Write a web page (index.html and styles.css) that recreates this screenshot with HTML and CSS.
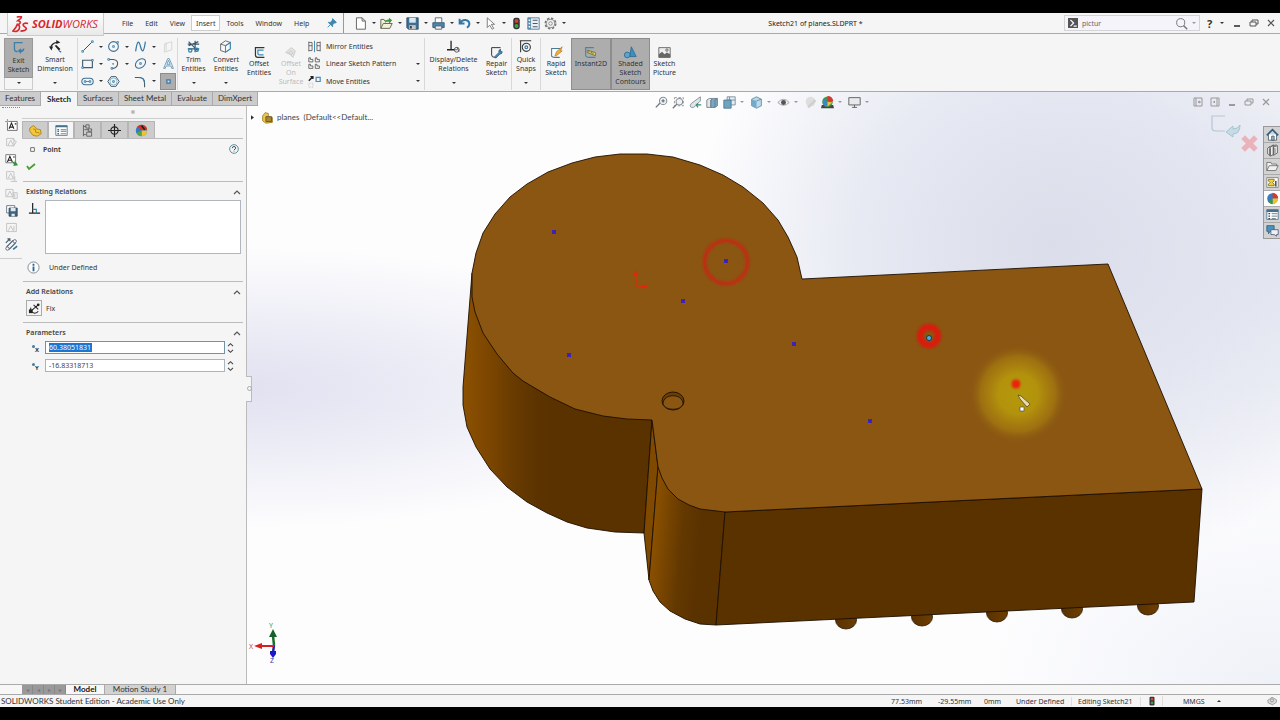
FILE: index.html
```html
<!DOCTYPE html>
<html lang="en">
<head>
<meta charset="utf-8">
<title>Sketch21 of planes.SLDPRT</title>
<link rel="stylesheet" href="styles.css">
</head>
<body>
<div class="app">

<header class="titlebar">
  <div class="logo">
    <svg class="logo-mark" viewBox="0 0 18 18"><path d="M5 1c2 0 5-1 5 0 0 2-3 3-4 4 3 0 4 2 1 4M6 8c-1 3-3 6-5 8 3 1 7 0 7-4 0-2-1-3-3-3M17 8c-3-1-6 0-5 2s4 2 3 4-3 2-6 2" fill="none" stroke="#d8262c" stroke-width="1.700"/></svg>
    <span class="logo-text"><b>SOLID</b>WORKS</span>
  </div>
  <nav class="menus">
    <button>File</button><button>Edit</button><button>View</button><button class="hot">Insert</button><button>Tools</button><button>Window</button><button>Help</button>
    <button class="pin" aria-label="Pin menu"><svg class="i10" viewBox="0 0 16 16"><path d="M9 1l6 6-2 1-2 0-2 3 0 3-7-7 3 0 3-2zM5 11l-4 4" fill="#3f86ae" stroke="#3f86ae" stroke-width="1.4"/></svg></button>
  </nav>
  <div class="quick">
    <button aria-label="New"><svg class="i14" viewBox="0 0 16 16"><path d="M3 1h7l4 4v10H3zM10 1v4h4" fill="#fff" stroke="#666" stroke-width="1.2"/></svg><i class="caret"></i></button>
    <button aria-label="Open"><svg class="i14" viewBox="0 0 16 16"><path d="M1 14V3h4l1 2h6v3M1 14l3-6h11l-3 6z" fill="#f2efda" stroke="#6a6a55" stroke-width="1.2"/><path d="M6 8c0-4 2-5 5-5V1l4 3-4 4V5c-2 0-4 1-5 3" fill="#3e9a3a"/></svg><i class="caret"></i></button>
    <button aria-label="Save"><svg class="i14" viewBox="0 0 16 16"><path d="M1 1h14v14H3l-2-2z" fill="#3d7094" stroke="#2b4a60"/><path d="M4 1h8v6H4z" fill="#d9e8f0"/><path d="M4 10h8v5H4z" fill="#c6c6c6"/><path d="M6 11v3" stroke="#333" stroke-width="2"/></svg><i class="caret"></i></button>
    <button aria-label="Print"><svg class="i14" viewBox="0 0 16 16"><path d="M4 7V1h8v6" fill="#fff" stroke="#456" /><path d="M1 7h14v6H1z" fill="#4a87ac" stroke="#2f536b"/><path d="M4 11h8v4H4z" fill="#eee" stroke="#456"/></svg><i class="caret"></i></button>
    <button aria-label="Undo"><svg class="i14" viewBox="0 0 16 16"><path d="M2 2v6h6M3 7c3-5 10-4 11 1 0 2-1 4-3 5" fill="none" stroke="#3577a3" stroke-width="2.4"/></svg><i class="caret"></i></button>
    <button aria-label="Select"><svg class="i14" viewBox="0 0 16 16"><path d="M4 1v12l3-3 3 5 2-1-3-5h4z" fill="#fff" stroke="#666"/></svg><i class="caret"></i></button>
    <button class="solo" aria-label="Rebuild"><svg class="i14" viewBox="0 0 16 16"><rect x="4" y="1" width="8" height="14" rx="3" fill="#333"/><circle cx="8" cy="5" r="2.4" fill="#e03b30"/><circle cx="8" cy="11" r="2.4" fill="#39a347"/></svg></button>
    <button class="solo" aria-label="File properties"><svg class="i14" viewBox="0 0 16 16"><path d="M1 1h14v14H1z" fill="#e9f1f5" stroke="#456f8a"/><path d="M1 1h4v14H1z" fill="#5d8dab"/><path d="M2 4h2M2 8h2M2 12h2" stroke="#fff" stroke-width="1.6"/><path d="M7 4h6M7 8h6M7 12h6" stroke="#456" stroke-width="1.2"/></svg></button>
    <button class="solo" aria-label="Options"><svg class="i14" viewBox="0 0 16 16"><circle cx="8" cy="8" r="6.4" fill="none" stroke="#777" stroke-width="2" stroke-dasharray="3 2"/><circle cx="8" cy="8" r="5" fill="#f4f4f4" stroke="#777"/><circle cx="8" cy="8" r="2.2" fill="none" stroke="#777"/></svg><i class="caret"></i></button>
  </div>
  <h1 class="doc-title">Sketch21 of planes.SLDPRT *</h1>
  <label class="search">
    <svg class="i10" viewBox="0 0 16 16"><path d="M0 0h16v16H0z" fill="#555"/><path d="M4 3l5 5-5 5M9 13h5" fill="none" stroke="#fff" stroke-width="2"/></svg>
    <input type="text" value="pictur" aria-label="Search">
    <svg class="i14" viewBox="0 0 16 16"><circle cx="7" cy="7" r="5" fill="none" stroke="#777" stroke-width="1.2"/><path d="M10.500 10.500l4.500 4.500" stroke="#777" stroke-width="1.800"/></svg><i class="caret grey"></i>
  </label>
  <div class="window-controls">
    <button class="help">?<i class="caret"></i></button>
    <button aria-label="Minimize"><svg class="i10" viewBox="0 0 10 10"><path d="M2 8h6" stroke="#333" stroke-width="1.600"/></svg></button>
    <button aria-label="Restore"><svg class="i10" viewBox="0 0 10 10"><path d="M1 4h6v4H1zM3 4V2h6v4H7" fill="none" stroke="#555"/></svg></button>
    <button aria-label="Close"><svg class="i10" viewBox="0 0 10 10"><path d="M2 2l6 6M8 2l-6 6" stroke="#555" stroke-width="1.200"/></svg></button>
  </div>
</header>

<section class="ribbon" aria-label="Sketch commands">
  <button class="tool exit"><span class="face"><svg class="i14" viewBox="0 0 16 16"><path d="M13 2H3v8q0 3 4 3" fill="none" stroke="#3e7fa8" stroke-width="1.600"/><path d="M7 12l4-3v2q3 0 4-3 1 5-4 6v2z" fill="#3e7fa8"/></svg><span>Exit<br>Sketch</span></span><i class="caret"></i></button>
  <button class="tool smart"><span class="face"><svg class="i14" viewBox="0 0 16 16"><path d="M2 10q1-6 8-7" fill="none" stroke="#222" stroke-width="1.500"/><path d="M0 8h5l-2 5zM9 0v5l5-2zM7 7l2-1 5 5-2 2z" fill="#222"/><path d="M12 13l3 2" stroke="#3577a3" stroke-width="1.500"/></svg><span>Smart<br>Dimension</span></span><i class="caret"></i></button>

  <div class="shapes">
    <button aria-label="Line"><svg class="i14" viewBox="0 0 16 16"><path d="M3 13L13 3" stroke="#444" stroke-width="1.200"/><path d="M1 13h2v2H1zM13 1h2v2h-2z" fill="#fff" stroke="#3577a3"/></svg><i class="caret"></i></button>
    <button aria-label="Circle"><svg class="i14" viewBox="0 0 16 16"><circle cx="8" cy="8" r="6" fill="none" stroke="#3b6f92" stroke-width="1.300"/><path d="M7 7h2v2H7zM12 2h2v2h-2z" fill="#fff" stroke="#3577a3"/></svg><i class="caret"></i></button>
    <button aria-label="Spline"><svg class="i14" viewBox="0 0 16 16"><path d="M2 14C4 0 6 0 8 8s4 8 6-6" fill="none" stroke="#3577a3" stroke-width="1.500"/></svg><i class="caret"></i></button>
    <button aria-label="Plane" disabled><svg class="i14" viewBox="0 0 16 16"><path d="M3 5l9-3v10l-9 3zM5 3v10" fill="none" stroke="#d0d0d0"/></svg></button>
    <button aria-label="Rectangle"><svg class="i14" viewBox="0 0 16 16"><path d="M2 4h12v9H2z" fill="none" stroke="#445d6e" stroke-width="1.400"/><path d="M1 12h2v2H1zM13 3h2v2h-2z" fill="#fff" stroke="#3577a3"/></svg><i class="caret"></i></button>
    <button aria-label="Arc"><svg class="i14" viewBox="0 0 16 16"><path d="M2 3h6q6 1 5 6-1 5-7 5" fill="none" stroke="#555" stroke-width="1.300"/><path d="M1 2h2v2H1zM5 13h2v2H5zM7 8h1v1H7z" fill="#fff" stroke="#3577a3"/></svg><i class="caret"></i></button>
    <button aria-label="Ellipse"><svg class="i14" viewBox="0 0 16 16"><ellipse cx="8" cy="8" rx="7" ry="5" transform="rotate(-40 8 8)" fill="none" stroke="#3b6f92" stroke-width="1.300"/><path d="M7 7h2v2H7z" fill="none" stroke="#3577a3"/></svg><i class="caret"></i></button>
    <button aria-label="Text"><svg class="i14" viewBox="0 0 16 16"><path d="M2 14L7 2h2l5 12h-2l-1-3H5l-1 3zM6 9h4L8 4z" fill="none" stroke="#5590b3"/></svg></button>
    <button aria-label="Slot"><svg class="i14" viewBox="0 0 16 16"><rect x="1" y="4" width="14" height="8" rx="4" fill="none" stroke="#3b6f92" stroke-width="1.300"/><path d="M4 7h2v2H4zM10 7h2v2h-2zM6 8h4" fill="none" stroke="#3577a3"/></svg><i class="caret"></i></button>
    <button aria-label="Polygon"><svg class="i14" viewBox="0 0 16 16"><path d="M5 2h6l4 6-4 6H5L1 8z" fill="none" stroke="#445d6e" stroke-width="1.200"/><circle cx="8" cy="8" r="4.400" fill="none" stroke="#73a8c6"/><path d="M7 7h2v2H7z" fill="none" stroke="#3577a3"/></svg></button>
    <button aria-label="Fillet"><svg class="i14" viewBox="0 0 16 16"><path d="M1 3h5q7 0 7 7v5" fill="none" stroke="#555" stroke-width="1.300"/><path d="M6 3q7 0 7 7" fill="none" stroke="#3577a3" stroke-width="1.300"/></svg><i class="caret"></i></button>
    <button class="pressed" aria-label="Point"><svg class="i14" viewBox="0 0 16 16"><path d="M6 6h4v4H6z" fill="#c6e0ee" stroke="#3577a3" stroke-width="1.500"/></svg></button>
  </div>

  <button class="tool trim"><span class="face"><svg class="i14" viewBox="0 0 16 16"><path d="M2 2l11 11M2 7l12-5M1 5h14M1 11h14M10 1v14" stroke="#34566e" stroke-width="1.400"/><circle cx="4" cy="13" r="2" fill="none" stroke="#2f83ad" stroke-width="1.500"/><circle cx="12" cy="12" r="2" fill="none" stroke="#2f83ad" stroke-width="1.500"/></svg><span>Trim<br>Entities</span></span><i class="caret"></i></button>
  <button class="tool convert"><span class="face"><svg class="i14" viewBox="0 0 16 16"><path d="M2 5l6-4 6 2v8l-6 4-6-2zM2 5l6 2 6-4M8 7v8" fill="#f8f8f8" stroke="#555"/><path d="M8 7v8l6-4V3z" fill="none" stroke="#3f8db8" stroke-width="1.300"/></svg><span>Convert<br>Entities</span></span><i class="caret"></i></button>
  <button class="tool offset low"><span class="face"><svg class="i14" viewBox="0 0 16 16"><path d="M14 2H3v9q0 3 3 3h8" fill="none" stroke="#333" stroke-width="1.500"/><path d="M13 5H6v4q0 2 2 2h5" fill="none" stroke="#3e8cb8" stroke-width="1.500"/></svg><span>Offset<br>Entities</span></span></button>
  <button class="tool surface low" disabled><span class="face"><svg class="i14" viewBox="0 0 16 16"><path d="M2 8l7-6 5 4-3 8-4-4zM6 8l3-2 2 2-2 3z" fill="#e4e4e4" stroke="#c4c4c4"/></svg><span>Offset<br>On<br>Surface</span></span></button>

  <div class="list">
    <button><svg class="i14" viewBox="0 0 16 16"><path d="M1 2v12M1 7h4M1 3h4v10H1M15 2v12M15 7h-4M15 3h-4v10h4" fill="none" stroke="#555"/><path d="M8 1v14" stroke="#3f8db8" stroke-width="1.200"/></svg><span>Mirror Entities</span></button>
    <button><svg class="i14" viewBox="0 0 16 16"><path d="M1 1h2v2h3v3H1zM9 1h2v2h3v3H9zM1 9h2v2h3v3H1zM9 9h2v2h3v3H9z" fill="none" stroke="#555"/></svg><span>Linear Sketch Pattern</span><i class="caret"></i></button>
    <button><svg class="i14" viewBox="0 0 16 16"><path d="M1 7l5-5M3 2h3v3" fill="none" stroke="#222" stroke-width="1.800"/><path d="M10 3h5v5h-5z" fill="none" stroke="#3f8db8" stroke-width="1.500"/><path d="M1 10h5v5H1z" fill="none" stroke="#bbb" stroke-dasharray="1 1"/></svg><span>Move Entities</span><i class="caret"></i></button>
  </div>

  <button class="tool relations"><span class="face"><svg class="i14" viewBox="0 0 16 16"><path d="M5 1v11M0 12h9" stroke="#222" stroke-width="1.600"/><circle cx="12" cy="12" r="3" fill="none" stroke="#444"/><path d="M9 12h4M12 9l3 5" stroke="#444"/></svg><span>Display/Delete<br>Relations</span></span><i class="caret"></i></button>
  <button class="tool repair low"><span class="face"><svg class="i14" viewBox="0 0 16 16"><path d="M13 2H2v9q0 3 4 3" fill="none" stroke="#333" stroke-width="1.200"/><path d="M6 13l5-5q-1-3 2-4v3h2q0 3-3 3l-5 5z" fill="#4d91b9" stroke="#245474"/></svg><span>Repair<br>Sketch</span></span></button>
  <button class="tool snaps"><span class="face"><svg class="i14" viewBox="0 0 16 16"><path d="M1 1h14M2 1v14" stroke="#333" stroke-width="1.300"/><circle cx="9" cy="9" r="5" fill="none" stroke="#333" stroke-width="1.300"/><circle cx="9" cy="9" r="1.700" fill="none" stroke="#3577a3" stroke-width="1.400"/></svg><span>Quick<br>Snaps</span></span><i class="caret"></i></button>
  <button class="tool rapid low"><span class="face"><svg class="i14" viewBox="0 0 16 16"><path d="M13 3H2v9q0 2 4 2h6" fill="#fff" stroke="#4b7a97" stroke-width="1.300"/><path d="M6 12l2-5 7-6-2 5h2l-7 6z" fill="#f0b233" stroke="#b16b1c" stroke-width=".8"/></svg><span>Rapid<br>Sketch</span></span></button>
  <button class="tool instant low pressed"><span class="face"><svg class="i14" viewBox="0 0 16 16"><path d="M12 2H2v9q0 3 5 3h7" fill="none" stroke="#3f87b1" stroke-width="1.400"/><path d="M4 5l10 3v4L4 8z" fill="#e8d965" stroke="#6d672f"/><path d="M6 6v2M9 7v2M11 8v2" stroke="#554"/></svg><span>Instant2D</span></span></button>
  <button class="tool shaded low pressed"><span class="face"><svg class="i14" viewBox="0 0 16 16"><path d="M9 1l6 12H7z" fill="#3d8fc0" stroke="#2a6890"/><circle cx="4" cy="11" r="3.500" fill="#5aa5cd" stroke="#2a6890"/></svg><span>Shaded<br>Sketch<br>Contours</span></span></button>
  <button class="tool picture low"><span class="face"><svg class="i14" viewBox="0 0 16 16"><path d="M1 2h14v12H1z" fill="#eee" stroke="#555"/><path d="M1 10l4-3 3 3 3-2 4 2v4H1z" fill="#666"/><circle cx="11" cy="5" r="1.500" fill="none" stroke="#555"/></svg><span>Sketch<br>Picture</span></span></button>
</section>

<main class="work">
  <nav class="ribbon-tabs">
    <button>Features</button><button class="active">Sketch</button><button>Surfaces</button><button>Sheet Metal</button><button>Evaluate</button><button>DimXpert</button>
  </nav>

  <aside class="left">
    <div class="rail">
      <span class="rail-grip"></span>
      <button aria-label="New note"><svg class="i14" viewBox="0 0 16 16"><path d="M3 3h12v11H3z" fill="#fff" stroke="#555"/><path d="M5 12l3-7 3 7M6 10h4M12 6h2" fill="none" stroke="#222" stroke-width="1.300"/><path d="M0 3h5M3 0v5" stroke="#d69a3a" stroke-width="1.300"/></svg></button>
      <button disabled aria-label="Edit note"><svg class="i14" viewBox="0 0 16 16"><path d="M2 3h9v9H2zM4 11l3-6 3 6M9 4l5 3-4 6" fill="none" stroke="#c4c4c4" stroke-width="1.200"/></svg></button>
      <button aria-label="Insert note"><svg class="i14" viewBox="0 0 16 16"><path d="M1 2h12v10H1z" fill="#fff" stroke="#666"/><path d="M3 11l3-7 3 7M4 9h4M10 5h2" fill="none" stroke="#222" stroke-width="1.300"/><path d="M8 9l4 3V9l4 6-6 1 1-2z" fill="#2c9636"/></svg></button>
      <button disabled aria-label="Add"><svg class="i14" viewBox="0 0 16 16"><path d="M2 2h9v9H2zM4 10l3-6 3 6M7 14h8M12 8v6" fill="none" stroke="#c4c4c4" stroke-width="1.200"/></svg></button>
      <button disabled aria-label="Delete"><svg class="i14" viewBox="0 0 16 16"><path d="M1 3h9v9H1zM3 11l3-6 3 6M10 7h5v7h-5zM12 8v5" fill="none" stroke="#c4c4c4" stroke-width="1.200"/></svg></button>
      <button aria-label="Save style"><svg class="i14" viewBox="0 0 16 16"><path d="M2 2h10v9H2z" fill="#fff" stroke="#567"/><path d="M5 5h10v10H5z" fill="#41637d" stroke="#2c455a"/><path d="M7 5h6v4H7zM8 12h4v3H8z" fill="#dde8ef"/></svg></button>
      <button disabled aria-label="Load style"><svg class="i14" viewBox="0 0 16 16"><path d="M2 3h12v10H2zM4 12l3-6 3 6M11 6v6" fill="none" stroke="#c4c4c4" stroke-width="1.200"/></svg></button>
      <button aria-label="Link"><svg class="i14" viewBox="0 0 16 16"><path d="M1 6l4-4M3 1h3v3M2 11l8-8M5 14l8-8" fill="none" stroke="#44586a" stroke-width="1.400"/><circle cx="3" cy="13" r="2" fill="#fff" stroke="#44586a"/><circle cx="12" cy="4" r="2" fill="#fff" stroke="#44586a"/><path d="M10 14l5-4" stroke="#3577a3" stroke-width="2"/></svg></button>
    </div>

    <div class="manager">
      <div class="grip"><span></span></div>
      <div class="mgr-tabs">
        <button aria-label="Feature tree"><svg class="i14" viewBox="0 0 16 16"><path d="M1 5l4-3 3 2 1 2 5 1 1 5-5 3-5-1-4-5z" fill="#f2c73a" stroke="#a97b12"/><path d="M5 6l3 1v3l5 1" fill="none" stroke="#a97b12"/></svg></button>
        <button class="active" aria-label="Properties"><svg class="i14" viewBox="0 0 16 16"><path d="M1 2h14v12H1z" fill="#fff" stroke="#456f8a"/><path d="M1 2h14v2H1z" fill="#456f8a"/><path d="M3 7h2M3 9h2M3 12h2" stroke="#2f6b94" stroke-width="1.600"/><path d="M7 7h7M7 9h7M7 12h7" stroke="#666"/></svg></button>
        <button aria-label="Configurations"><svg class="i14" viewBox="0 0 16 16"><path d="M3 1v14M3 3h3M3 13h3M6 1h4v4H6zM9 6h4v3H9zM7 10h6v5H7zM4 7h5" fill="none" stroke="#555"/></svg></button>
        <button aria-label="Dimensions"><svg class="i14" viewBox="0 0 16 16"><circle cx="8" cy="8" r="4.500" fill="none" stroke="#222" stroke-width="1.400"/><path d="M8 0v16M0 8h16" stroke="#222" stroke-width="1.400"/></svg></button>
        <button aria-label="Display"><svg class="i14" viewBox="0 0 16 16"><circle cx="8" cy="8" r="7" fill="#3a77bd"/><path d="M8 8L3 3a7 7 0 0 1 12 4z" fill="#d43228"/><path d="M8 8h7a7 7 0 0 1-7 7z" fill="#eec52f"/><path d="M8 8v7a7 7 0 0 1-6-4z" fill="#4ca64a"/><path d="M8 2l4 5" stroke="#222" stroke-width="2"/></svg></button>
      </div>
      <div class="point-head">
        <svg class="i14" viewBox="0 0 14 14"><path d="M5 5h4v4H5z" fill="#fff" stroke="#666"/></svg>
        <h2>Point</h2>
        <button aria-label="Help"><svg class="i10" viewBox="0 0 12 12"><circle cx="6" cy="6" r="5.200" fill="none" stroke="#467a84"/><path d="M4 5q0-2 2-2t2 2q0 1-2 2M6 8v1" fill="none" stroke="#355b78" stroke-width="1.200"/></svg></button>
        <button class="ok" aria-label="OK"><svg class="i10" viewBox="0 0 10 10"><path d="M1 5l2 3 6-5" fill="none" stroke="#4b9d33" stroke-width="1.800"/></svg></button>
      </div>

      <section class="group relations-group">
        <h3>Existing Relations<svg class="chev" viewBox="0 0 8 6"><path d="M1 5l3-3 3 3" fill="none" stroke="#555" stroke-width="1.200"/></svg></h3>
        <div class="relation-row">
          <svg class="i14" viewBox="0 0 14 14"><path d="M5 1v11M1 12h12" stroke="#222" stroke-width="1.300"/><path d="M5 8h4v4" fill="none" stroke="#2f83ad" stroke-width="1.200"/></svg>
          <div class="relation-box" role="listbox" aria-label="Existing relations"></div>
        </div>
        <p class="state"><svg class="i14" viewBox="0 0 14 14"><circle cx="7" cy="7" r="6" fill="#fff" stroke="#7a8791"/><path d="M7 6v5M7 3v2" stroke="#2b6795" stroke-width="2"/></svg>Under Defined</p>
      </section>

      <section class="group add-group">
        <h3>Add Relations<svg class="chev" viewBox="0 0 8 6"><path d="M1 5l3-3 3 3" fill="none" stroke="#555" stroke-width="1.200"/></svg></h3>
        <button class="fix"><span class="fix-icon"><svg class="i14" viewBox="0 0 14 14"><path d="M3 6q-1 5 4 6 3 0 4-2M4 9l7-6M6 3l5 5" fill="none" stroke="#222" stroke-width="1.100"/><path d="M1 8h4v4H1z" fill="#222"/><circle cx="11" cy="3" r="1.500" fill="#222"/></svg></span>Fix</button>
      </section>

      <section class="group param-group">
        <h3>Parameters<svg class="chev" viewBox="0 0 8 6"><path d="M1 5l3-3 3 3" fill="none" stroke="#555" stroke-width="1.200"/></svg></h3>
        <div class="param">
          <label for="px"><i class="dot"></i><sub>X</sub></label>
          <div class="field focus"><input id="px" type="text" value="60.38051831"></div>
          <span class="spin"><button aria-label="Increase X"><svg viewBox="0 0 8 6"><path d="M1 5l3-3 3 3" fill="none" stroke="#444" stroke-width="1.300"/></svg></button><button aria-label="Decrease X"><svg viewBox="0 0 8 6"><path d="M1 1l3 3 3-3" fill="none" stroke="#444" stroke-width="1.300"/></svg></button></span>
        </div>
        <div class="param">
          <label for="py"><i class="dot"></i><sub>Y</sub></label>
          <div class="field"><input id="py" type="text" value="-16.83318713"></div>
          <span class="spin"><button aria-label="Increase Y"><svg viewBox="0 0 8 6"><path d="M1 5l3-3 3 3" fill="none" stroke="#444" stroke-width="1.300"/></svg></button><button aria-label="Decrease Y"><svg viewBox="0 0 8 6"><path d="M1 1l3 3 3-3" fill="none" stroke="#444" stroke-width="1.300"/></svg></button></span>
        </div>
      </section>
    </div>
  </aside>

  <section class="viewport">
    <svg class="scene" viewBox="247 92 1033 592" preserveAspectRatio="xMidYMid meet" role="img" aria-label="Part model">
      <defs>
        <linearGradient id="sideL" gradientUnits="userSpaceOnUse" x1="463" y1="0" x2="550" y2="0"><stop offset="0" stop-color="#8c5100"/><stop offset=".3" stop-color="#7c4600"/><stop offset=".6" stop-color="#673a00"/><stop offset=".85" stop-color="#5c3300"/><stop offset="1" stop-color="#5a3200"/></linearGradient>
        <linearGradient id="sideF" gradientUnits="userSpaceOnUse" x1="650" y1="560" x2="698" y2="564"><stop offset="0" stop-color="#8c5100"/><stop offset=".6" stop-color="#643900"/><stop offset="1" stop-color="#5a3200"/></linearGradient>
        <linearGradient id="ball"><stop offset="0" stop-color="#5a3200"/><stop offset="1" stop-color="#6c3e00"/></linearGradient>
        <radialGradient id="halo"><stop offset="0" stop-color="#b4990c"/><stop offset=".4" stop-color="#b3920c"/><stop offset=".75" stop-color="#a37610" stop-opacity=".8"/><stop offset="1" stop-color="#8a5612" stop-opacity="0"/></radialGradient>
        <filter id="soft" x="-20%" y="-20%" width="140%" height="140%"><feGaussianBlur stdDeviation=".8"/></filter>
        <g id="pt"><path d="M-2-2h4v4h-4z" fill="#4a2f80"/><path d="M-2-2l4 4M2-2l-4 4" stroke="#2e18f0" stroke-width="1"/></g>
      </defs>
      <g fill="url(#ball)" stroke="#241300" stroke-width=".8">
        <ellipse cx="846" cy="620" rx="10.500" ry="9"/><ellipse cx="922" cy="617" rx="10.500" ry="9"/><ellipse cx="997" cy="613" rx="10.500" ry="9"/><ellipse cx="1072" cy="609" rx="10.500" ry="9"/><ellipse cx="1148" cy="606" rx="10.500" ry="9"/>
      </g>
      <g stroke="#1c0f00" stroke-width=".9" stroke-linejoin="round">
        <path fill="url(#sideL)" d="M472 273L463 387V405L467 427 476 447 490 469 507 487 527 502 547 513 567 522 587 528 615 532 644 533 652 420 540 330z"/>
        <path fill="#7f4900" d="M652 420L644 533 649 580 658 467z"/>
        <path fill="url(#sideF)" d="M658 467L649 580 653 591 660 602 670 611 685 619 700 624 716 625 725 512z"/>
        <path fill="#5a3200" d="M725 512L1202 489 1194 602 716 625z"/>
        <path fill="#8a5612" d="M802 279L1108 264 1202 489 725 512 700 509 689 505 678 499 668 489 662 478 658 467 652 420 627 419 603 416 575 409 550 397 523 381 513 373 497 354 483 333 475 312 472 297V273L476 253 483 233 495 214 510 197 527 184 548 172 572 163 595 157 620 154H647L673 157 700 165 723 175 743 187 763 203 778 220 788 237 797 257z"/>
      </g>
      <ellipse cx="673" cy="401" rx="11" ry="9" fill="#6a3d04" stroke="#1c0f00" stroke-width=".9"/>
      <path d="M663 404c0-11 20-11 20 0-2 7-18 7-20 0z" fill="#8a5612" stroke="#1c0f00" stroke-width=".8"/>
      <g fill="none" filter="url(#soft)"><circle cx="726" cy="262" r="21.500" stroke="#c32c12" stroke-width="3.600"/><circle cx="929" cy="336" r="9" stroke="#d81e0a" stroke-width="6.400"/></g>
      <circle cx="1018" cy="394" r="50" fill="url(#halo)"/>
      <circle cx="1016" cy="384" r="4.500" fill="#ec2008" filter="url(#soft)"/>
      <use href="#pt" x="554" y="232"/><use href="#pt" x="726" y="261"/><use href="#pt" x="683" y="301"/><use href="#pt" x="569" y="355"/><use href="#pt" x="794" y="344"/><use href="#pt" x="870" y="421"/>
      <circle cx="929" cy="338" r="2.500" fill="#4baee8" stroke="#183a4c"/>
      <path d="M636 274v12h8" fill="none" stroke="#ed220a" stroke-width="1"/><path d="M635.500 269l2 7h-4zM648 286.500l-6 2v-4z" fill="#ed220a"/>
      <path d="M1018 395l3 1 9 8-3 3-7-8z" fill="#e8dcae" stroke="#584a22" stroke-width=".8"/><path d="M1020 407h4v4h-4z" fill="#fff" stroke="#555" stroke-width=".7"/>
      <path d="M274 645L273 636" stroke="#1b6d2c" stroke-width="2.500"/><path d="M273 629l-4 8h8z" fill="#17602a"/>
      <path d="M274 645l-1 8" stroke="#2020b0" stroke-width="2.500"/><path d="M270 651h6v3l-3 4-3-4z" fill="#1818c8"/>
      <path d="M274 646h-12" stroke="#d81e1e" stroke-width="2"/><path d="M254 646l8-3v6z" fill="#d81e1e"/>
      <g class="axis"><text x="249" y="649" fill="#bd4242">X</text><text x="269" y="628" fill="#3f9c42">Y</text><text x="270" y="663" fill="#4040a0">Z</text></g>
    </svg>

    <div class="view-head">
      <div class="hud">
        <button aria-label="Zoom to fit"><svg class="i14" viewBox="0 0 16 16"><circle cx="10" cy="6" r="4.500" fill="#eef4f8" stroke="#8a8f96" stroke-width="1.300"/><path d="M6 9l-5 5M8 6h4M10 4v4" stroke="#6d7680" stroke-width="1.600"/></svg></button>
        <button aria-label="Zoom to area"><svg class="i14" viewBox="0 0 16 16"><path d="M3 2h11v10H3z" fill="none" stroke="#888" stroke-dasharray="3 2"/><circle cx="9" cy="7" r="4" fill="#eef4f8" stroke="#8a8f96" stroke-width="1.300"/><path d="M6 10l-5 5" stroke="#6d7680" stroke-width="1.600"/></svg></button>
        <button aria-label="Previous view"><svg class="i14" viewBox="0 0 16 16"><path d="M14 1L3 9q-3 4 0 5t5-2l6-6z" fill="#dfe5e9" stroke="#7b8288"/><path d="M9 11h6M11 9l-2 2 2 3" fill="none" stroke="#2f8f76" stroke-width="1.500"/></svg></button>
        <button aria-label="Section view"><svg class="i14" viewBox="0 0 16 16"><path d="M1 5l3-2h4l-2 2v9H1z" fill="#e3e8eb" stroke="#67757f"/><path d="M6 5l3-2h5v9l-3 2H6z" fill="#7ba9c3" stroke="#5c7585"/><path d="M11 5v9M11 5l3-2" stroke="#5c7585"/></svg></button>
        <button class="drop" aria-label="View orientation"><svg class="i14" viewBox="0 0 16 16"><path d="M5 1h10v10H5zM8 1v10M5 5h10" fill="#e6edf2" stroke="#708594"/><path d="M1 5h9v10H1z" fill="#6ea3c1" stroke="#49758f"/></svg><i class="caret grey"></i></button>
        <button class="drop" aria-label="Display style"><svg class="i14" viewBox="0 0 16 16"><path d="M2 4l6-3 6 3v8l-6 3-6-3z" fill="#bcd9e8" stroke="#5b8299"/><path d="M2 4l6 2v9l-6-3z" fill="#72aac9"/><path d="M8 6l6-2" stroke="#5b8299"/></svg><i class="caret grey"></i></button>
        <button class="drop" aria-label="Hide or show"><svg class="i14" viewBox="0 0 16 16"><path d="M1 8q7-8 14 0-7 7-14 0z" fill="#eee" stroke="#999"/><circle cx="8" cy="8" r="3" fill="#555"/></svg><i class="caret grey"></i></button>
        <button aria-label="Edit appearance" disabled><svg class="i14" viewBox="0 0 16 16"><circle cx="8" cy="7" r="6" fill="#dedede"/><path d="M5 14l9-9" stroke="#cfcfcf" stroke-width="3"/></svg></button>
        <button class="drop" aria-label="Scene"><svg class="i14" viewBox="0 0 16 16"><path d="M1 11h14l1 4H0z" fill="#444"/><circle cx="8" cy="7" r="6.500" fill="#3c9a45"/><path d="M8 7V0a7 7 0 0 1 7 6z" fill="#d4392f"/><path d="M8 7v6a6 6 0 0 1-6-6l2-4z" fill="#3b86c4"/><path d="M8 7l6 1-6 5z" fill="#efc339"/></svg><i class="caret grey"></i></button>
        <button class="drop" aria-label="View settings"><svg class="i14" viewBox="0 0 16 16"><path d="M1 2h14v9H1zM8 11v3M5 14h6" fill="#e7eaec" stroke="#666" stroke-width="1.200"/></svg><i class="caret grey"></i></button>
      </div>
      <div class="doc-controls">
        <button aria-label="Expand left"><svg class="i10" viewBox="0 0 10 10"><path d="M1 1h8v8H1zM3 1v8M7 4v2L5 5z" fill="none" stroke="#999"/></svg></button>
        <button aria-label="Expand right"><svg class="i10" viewBox="0 0 10 10"><path d="M1 1h8v8H1zM7 1v8M4 4v2l1-1z" fill="none" stroke="#999"/></svg></button>
        <button aria-label="Minimize document"><svg class="i10" viewBox="0 0 10 10"><path d="M2 8h6" stroke="#888" stroke-width="1.600"/></svg></button>
        <button aria-label="Restore document"><svg class="i10" viewBox="0 0 10 10"><path d="M1 4h6v4H1zM3 4V2h6v4H7" fill="none" stroke="#999"/></svg></button>
        <button aria-label="Close document"><svg class="i10" viewBox="0 0 10 10"><path d="M2 2l6 6M8 2l-6 6" stroke="#999" stroke-width="1.200"/></svg></button>
      </div>
    </div>
    <div class="tree"><svg class="tri" viewBox="0 0 4 6"><path d="M0 0l4 3-4 3z" fill="#333"/></svg><svg class="i14" viewBox="0 0 16 16"><path d="M2 6l3-4 4 1v4l5 1v6l-8 1-4-3z" fill="#efc54a" stroke="#9b7a22"/><path d="M6 7h7v6H6z" fill="#a98735" stroke="#5c4b20"/></svg><span>planes&nbsp; (Default&lt;&lt;Default...</span></div>

    <div class="confirm">
      <button aria-label="Exit sketch"><svg viewBox="0 0 30 24"><path d="M14 2H1v12q0 3 4 3h9" fill="none" stroke="#b8c6d4" stroke-width="1.200"/><path d="M15 18l7-6v3q5 0 7-4 0 9-7 9v3z" fill="#c5dbe6" stroke="#a9c3d0"/></svg></button>
      <button class="cancel" aria-label="Cancel sketch"><svg viewBox="0 0 16 16"><path d="M2 2l12 12M14 2L2 14" stroke="#ebb3b9" stroke-width="5"/></svg></button>
    </div>

    <nav class="task-pane">
      <button aria-label="Home"><svg class="i14" viewBox="0 0 16 16"><path d="M3 8v7h10V8" fill="#fff" stroke="#456"/><path d="M1 9l7-7 7 7" fill="none" stroke="#2e5d80" stroke-width="2"/><path d="M7 10h3v5H7z" fill="#abc" stroke="#456"/></svg></button>
      <button aria-label="Design library"><svg class="i14" viewBox="0 0 16 16"><path d="M2 5l3-2v11l-3-2zM5 4l4-3v12l-4 2zM9 4l5-2v9l-5 3zM6 3l7-2M5 6v7M11 5v7" fill="#eee" stroke="#555"/></svg></button>
      <button aria-label="File explorer"><svg class="i14" viewBox="0 0 16 16"><path d="M1 13V3h5l1 2h6v2M1 13l3-6h11l-3 6z" fill="#f1f1f1" stroke="#666"/></svg></button>
      <button aria-label="View palette"><svg class="i14" viewBox="0 0 16 16"><path d="M1 2h14v12H1z" fill="#fff" stroke="#777"/><path d="M3 4h7v2L8 8l2 2v2H3v-2l2-2-2-2z" fill="#f0d036" stroke="#76671b"/><path d="M12 6v7" stroke="#555" stroke-width="2"/></svg></button>
      <button class="active" aria-label="Appearances"><svg class="i14" viewBox="0 0 16 16"><circle cx="8" cy="8" r="6.500" fill="#3878c8"/><path d="M8 8V1a7 7 0 0 1 7 7z" fill="#d8382a"/><path d="M8 8h7a7 7 0 0 1-7 7z" fill="#efc230"/><path d="M8 8v7a7 7 0 0 1-6-4z" fill="#37984b"/></svg></button>
      <button aria-label="Custom properties"><svg class="i14" viewBox="0 0 16 16"><path d="M1 2h14v12H1z" fill="#fff" stroke="#456f8a"/><path d="M1 2h14v3H1z" fill="#456f8a"/><path d="M3 7h2M3 10h2M3 13h2" stroke="#246" stroke-width="1.600"/><path d="M7 7h7M7 10h7M7 13h5" stroke="#567"/></svg></button>
      <button aria-label="Forum"><svg class="i14" viewBox="0 0 16 16"><path d="M1 2h9v7H5l-2 3V9H1z" fill="#4b93bb" stroke="#2c5f80"/><path d="M6 7h9v6h-2v2l-3-2H6z" fill="#eaf2f6" stroke="#557"/></svg></button>
    </nav>
    <span class="splitter"></span>
  </section>
</main>

<nav class="bottom-tabs">
  <div class="pager"><button disabled>◂</button><button disabled>◂</button><button disabled>▸</button><button disabled>▸</button></div>
  <button class="model active">Model</button><button class="motion">Motion Study 1</button>
</nav>
<footer class="status">
  <span class="edition">SOLIDWORKS Student Edition - Academic Use Only</span>
  <span class="c1">77.53mm</span><span class="c2">-29.55mm</span><span class="c3">0mm</span><span class="c4">Under Defined</span><span class="c5">Editing Sketch21</span>
  <span class="c6"><svg class="i10" viewBox="0 0 16 16"><rect x="4" y="1" width="8" height="14" rx="2" fill="#333"/><circle cx="8" cy="5" r="2.200" fill="#c84a3a"/><circle cx="8" cy="11" r="2.200" fill="#3c9b50"/></svg></span>
  <button class="c7">MMGS<i class="caret up"></i></button>
  <svg class="i10" viewBox="0 0 16 16"><path d="M1 7l7-5 7 4v4l-6 4-7-3z" fill="#ddd" stroke="#777"/><circle cx="8" cy="7" r="2.500" fill="none" stroke="#777"/></svg>
</footer>
</div>
</body>
</html>
```

FILE: styles.css
```css
* { box-sizing: border-box; }

body {
  margin: 0;
  background: #000;
  color: #333;
  font: 7px/9px "Noto Sans", "Open Sans", sans-serif;
}

button {
  margin: 0;
  padding: 0;
  border: 0;
  background: none;
  color: inherit;
  font: inherit;
  display: flex;
  align-items: center;
  justify-content: center;
}

button:disabled { color: #bbb; }
h1, h2, h3, p { margin: 0; font: inherit; }
svg { display: block; flex: none; }
.i14 { width: 13px; height: 13px; }
.i10 { width: 10px; height: 10px; }

.caret {
  width: 4px;
  border: 2px solid transparent;
  border-top-color: #333;
  border-bottom: 0;
  flex: none;
}
.caret.grey { border-top-color: #999; }
.caret.up { border-top: 0; border-bottom: 2px solid #333; }

.app {
  min-height: 100vh;
  padding: 13px 0;
  display: flex;
  flex-direction: column;
}

/* Title bar */
.titlebar {
  height: 21px;
  flex: none;
  display: flex;
  align-items: center;
  background: #f5f5f5;
  border-bottom: 1px solid #aaa;
}
.logo {
  width: 97px;
  height: 23px;
  margin-left: 7px;
  align-self: flex-start;
  display: flex;
  align-items: center;
  gap: 3px;
  padding-left: 4px;
  background: linear-gradient(#fff, #e9e9e9);
  border: 1px solid #ccc;
  border-top: 0;
  position: relative;
  z-index: 1;
}
.logo-mark { width: 17px; height: 17px; }
.logo-text { color: #d8262c; font: italic 11px/12px "Open Sans", sans-serif; }
.menus { display: flex; align-items: center; margin-left: 12px; align-self: stretch; border-right: 1px solid #999; width: 228px; }
.menus button { height: 16px; padding: 0 5px; border: 1px solid transparent; }
.menus .hot { background: #fff; border-color: #ccc; padding: 0 4px; }
.menus .pin { margin-left: auto; }
.quick { display: flex; margin-left: 10px; }
.quick button { width: 26px; gap: 5px; justify-content: flex-start; }
.quick .solo { width: 17px; }
.doc-title { flex: 1; text-align: center; color: #222; padding-left: 6px; }
.search {
  width: 136px;
  height: 16px;
  display: flex;
  align-items: center;
  gap: 4px;
  padding: 0 3px;
  border: 1px solid #d4d4d8;
  background: #f4f4fa;
}
.search input { flex: 1; min-width: 0; border: 0; padding: 0; background: none; font: inherit; color: #666; }
.window-controls { display: flex; gap: 7px; margin: 0 4px; }
.window-controls .help { width: 20px; padding-left: 3px; justify-content: space-between; margin-right: 1px; font-size: 11px; font-weight: 700; }

/* Ribbon */
.ribbon {
  height: 58px;
  flex: none;
  display: flex;
  align-items: stretch;
  padding: 4px 4px 1px;
  background: #f5f5f5;
  border-bottom: 1px solid #aaa;
}
.tool { flex: none; flex-direction: column; justify-content: space-between; line-height: 9px; padding-bottom: 6px; white-space: nowrap; }
.face { display: flex; flex-direction: column; align-items: center; gap: 2px; padding-top: 2px; }
.low { justify-content: flex-start; padding-bottom: 0; }
.low .face { padding-top: 8px; gap: 0; }
.pressed { background: #adadad; border: 1px solid #8d8d8d; }
.exit { width: 29px; border: 1px solid #ccc; padding-bottom: 5px; }
.exit .face { width: 29px; height: 40px; margin-top: -1px; background: #adadad; border: 1px solid #999; }
.smart { width: 44px; }
.shapes {
  width: 101px;
  flex: none;
  display: grid;
  grid-template-columns: 26px 27px 26px 16px;
  grid-template-rows: repeat(3, 1fr);
  padding-left: 3px;
  border-left: 1px solid #d8d8d8;
  border-right: 1px solid #d8d8d8;
}
.shapes button { justify-content: flex-start; gap: 5px; }
.shapes button:nth-child(4n) { justify-content: center; }
.trim { width: 31px; }
.convert { width: 34px; }
.offset { width: 32px; }
.surface { width: 32px; }
.list { width: 118px; flex: none; display: grid; grid-template-rows: repeat(3, 1fr); padding: 0 4px 0 1px; border-right: 1px solid #d8d8d8; }
.list button { justify-content: flex-start; gap: 5px; white-space: nowrap; }
.list .caret { margin-left: auto; }
.relations { width: 57px; }
.repair { width: 30px; border-right: 1px solid #d8d8d8; }
.snaps { width: 29px; border-right: 1px solid #d8d8d8; }
.rapid { width: 30px; }
.instant { width: 40px; }
.shaded { width: 39px; }
.instant.pressed .face, .shaded.pressed .face { padding-top: 7px; }
.picture { width: 29px; }

/* Work area */
.work {
  flex: 1;
  display: grid;
  grid-template-columns: 247px 1fr;
  grid-template-rows: 14px 1fr;
  background: #f5f5f5;
}
.ribbon-tabs, .bottom-tabs, .edition, .tree { font-family: Lato, "Open Sans", sans-serif; font-size: 8px; }
.ribbon-tabs { grid-area: 1 / 1; display: flex; width: max-content; position: relative; z-index: 2; }
.ribbon-tabs button { padding: 0 5px; background: #ccc; border: 1px solid #aaa; border-left: 0; border-top: 0; color: #333; }
.ribbon-tabs .active { background: #f5f5f5; border-bottom: 0; padding: 0 6px; font-weight: 700; color: #222; }
.left { grid-area: 2 / 1; display: flex; border-right: 1px solid #bbb; }
.rail { width: 22px; height: 153px; flex: none; display: flex; flex-direction: column; align-items: center; gap: 4px; border-bottom: 1px solid #ccc; }
.rail-grip { width: 18px; height: 4px; margin: 1px 0 4px; border-top: 1px dotted #888; flex: none; }
.manager { flex: 1; padding: 0 3px 0 0; }
.grip { height: 13px; display: grid; place-items: center; border-bottom: 1px solid #ccc; }
.grip span { width: 4px; height: 4px; border-radius: 50%; background: #bbb; }
.mgr-tabs { display: flex; margin-top: 2px; border-bottom: 1px solid #bbb; }
.mgr-tabs button { width: 26px; height: 17px; background: #ccc; border: 1px solid #b5b5b5; border-bottom: 0; }
.mgr-tabs .active { background: #f5f5f5; }
.mgr-tabs button:nth-child(n+3) { width: 27px; }
.point-head { display: grid; grid-template-columns: 14px 1fr 10px; grid-template-rows: 16px 18px; align-items: center; column-gap: 3px; padding: 2px 4px 6px 3px; border-bottom: 1px solid #bbb; margin-left: 1px; }
.point-head h2 { font-weight: 600; }
.point-head .ok { grid-area: 2 / 1; justify-content: flex-start; }
.group { margin-left: 1px; padding: 5px 2px 0 3px; border-bottom: 1px solid #bbb; }
.group h3 { display: flex; justify-content: space-between; align-items: center; font-weight: 600; color: #444; height: 9px; }
.chev { width: 8px; height: 6px; }
.relations-group { height: 100px; }
.relation-row { display: flex; gap: 4px; margin-top: 4px; padding-left: 2px; }
.relation-row .i14 { margin-top: 2px; }
.relation-box { flex: 1; height: 54px; background: #fff; border: 1px solid #b0b6be; }
.state { display: flex; align-items: center; gap: 9px; margin-top: 7px; padding-left: 1px; }
.add-group { height: 41px; }
.fix { gap: 4px; margin-top: 4px; }
.fix-icon { width: 16px; height: 16px; border: 1px solid #aaa; display: grid; place-items: center; }
.param-group { border-bottom: 0; }
.param { display: flex; align-items: center; margin-top: 4px; }
.param label { width: 19px; height: 13px; display: flex; justify-content: center; padding-top: 4px; }
.param label sub { font-size: 6px; font-weight: 700; line-height: 10px; }
.dot { width: 3px; height: 3px; border-radius: 50%; background: #4b7b98; }
.field { flex: 1; display: flex; height: 13px; border: 1px solid #a9b4bd; background: #fff; padding: 0 3px; }
.field.focus { border-color: #7193a8; }
.field input { width: 100%; border: 0; padding: 0; outline: 0; background: none; font: inherit; color: #444; }
.field.focus input {
  width: 43px;
  height: 9px;
  margin-top: 1px;
  background: #1976d2;
  color: #fff;
}
.param + .param { margin-top: 5px; }
.spin { width: 16px; padding-right: 6px; display: flex; flex-direction: column; align-items: center; gap: 2px; }
.spin svg { width: 7px; height: 5px; }

/* Graphics area */
.viewport {
  grid-area: 1 / 2 / 3 / 3;
  position: relative;
  background:
    radial-gradient(ellipse 360px 330px at 78% 26%, #dbdeea 0, rgba(224, 227, 239, .8) 50%, transparent 100%),
    radial-gradient(ellipse 400px 260px at 100% 30%, #e6e8f2 0, transparent 100%),
    radial-gradient(ellipse 460px 140px at 0 50%, #e1e1f1 0, rgba(232, 232, 244, .7) 50%, transparent 100%),
    radial-gradient(ellipse 300px 200px at 100% 100%, #eff1f8 0, transparent 100%),
    #fdfdfe;
}
.scene { position: absolute; width: 100%; height: 100%; inset: 0; }
.axis { font: 7px "Noto Sans", sans-serif; }
.view-head { position: relative; display: grid; grid-template-columns: 1fr auto 1fr; align-items: center; height: 20px; }
.hud { grid-column: 2; display: flex; gap: 4px; margin-right: 2px; }
.hud .drop { gap: 4px; width: 23px; justify-content: flex-start; }
.doc-controls { justify-self: end; display: flex; gap: 7px; margin-right: 9px; }
.tree { position: relative; display: flex; align-items: center; gap: 3px; height: 11px; padding-left: 4px; color: #444; }
.tri { width: 3px; height: 5px; margin-right: 4px; }
.tree span { white-space: nowrap; }
.confirm { position: absolute; right: 21px; top: 22px; width: 48px; }
.confirm button:first-child svg { width: 30px; height: 24px; }
.confirm .cancel { margin: -3px 0 0 30px; }
.confirm .cancel svg { width: 17px; height: 17px; }
.task-pane { position: absolute; right: 0; top: 34px; width: 17px; border: 1px solid #999; border-right: 0; background: #d2d2d2; }
.task-pane button { width: 100%; height: 16px; border-bottom: 1px solid #aaa; }
.task-pane button:last-child { border-bottom: 0; height: 15px; }
.task-pane .active { background: #fff; }
.splitter { position: absolute; left: -1px; top: 48%; width: 6px; height: 26px; background: #f5f5f5; border: 1px solid #bbb; border-left: 0; }
.splitter::after { content: ""; position: absolute; left: 1px; top: 9px; width: 3px; height: 3px; border: 1px solid #aaa; border-radius: 50%; }

/* Bottom rows */
.bottom-tabs { height: 11px; flex: none; display: flex; padding-left: 22px; background: #f7f7f7; border-top: 1px solid #aaa; border-bottom: 1px solid #aaa; }
.pager { display: flex; width: 44px; background: #999; }
.pager button { flex: 1; border-right: 1px solid #888; color: #777; font-size: 6px; line-height: 8px; }
.bottom-tabs .model { width: 38px; font-weight: 700; color: #111; }
.bottom-tabs .motion { width: 72px; background: #d2d2d2; border-left: 1px solid #aaa; border-right: 1px solid #aaa; }
.status { height: 12px; flex: none; display: flex; align-items: center; padding: 0 3px 0 1px; background: #f5f5f5; white-space: nowrap; }
.edition { flex: 1; }
.c1 { width: 47px; }
.c2 { width: 46px; }
.c3 { width: 32px; }
.c4 { width: 56px; border-right: 1px solid #ddd; }
.c5 { width: 69px; padding-left: 6px; border-right: 1px solid #ddd; }
.c6 { width: 22px; display: grid; place-items: center; border-right: 1px solid #ddd; }
.status .c7 { width: 104px; gap: 12px; justify-content: flex-start; padding-left: 20px; }
```
